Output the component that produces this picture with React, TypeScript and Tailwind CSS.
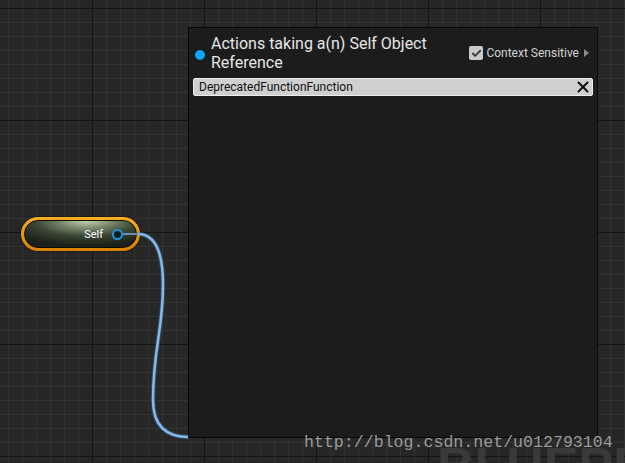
import { Check, X } from "lucide-react";

const gridBg =
    "bg-[#272727] [background-image:linear-gradient(to_right,#151515_1px,transparent_1px),linear-gradient(to_bottom,#151515_1px,transparent_1px),linear-gradient(to_right,#323232_1px,transparent_1px),linear-gradient(to_bottom,#323232_1px,transparent_1px)] [background-size:112px_112px,112px_112px,14px_14px,14px_14px] [background-position:92px_8px,92px_8px,92px_8px,92px_8px]";

const SelfNode = () => {
    return (
        <div className="absolute left-[21px] top-[217px] w-[119px] h-[34px] rounded-full p-[3px] bg-gradient-to-b from-[#f7ae22] to-[#d98200] shadow-[0_0_2px_#000]">
            <div className="w-full h-full rounded-full border border-[#0c0c0c] bg-[radial-gradient(ellipse_75%_95%_at_55%_0%,#c3d2b0_0%,#7a8a6c_30%,#3a4534_62%,#1b2018_100%)] flex items-center justify-end pr-[13px]">
                <span className="text-[11px] text-white font-['Roboto',sans-serif] mr-[9px] leading-none">Self</span>
                <span className="w-[11px] h-[11px] rounded-full border-2 border-[#1c93dc] bg-[#161a16]"></span>
            </div>
        </div>
    );
};

const Wire = () => {
    return (
        <svg className="absolute left-0 top-0" width="625" height="463">
            <path
                d="M138 234 C152 234 163 245 163 285 C163 330 153 350 153 400 C153 425 165 437 189 437"
                fill="none"
                stroke="#3d6b96"
                strokeWidth="4.5"
                strokeOpacity="0.5"
            />
            <path
                d="M138 234 C152 234 163 245 163 285 C163 330 153 350 153 400 C153 425 165 437 189 437"
                fill="none"
                stroke="#86b9ea"
                strokeWidth="2.5"
            />
            <path d="M123 234 L138 234" stroke="#6d8fae" strokeWidth="2" />
        </svg>
    );
};

const ActionMenu = () => {
    return (
        <div className="absolute left-[188px] top-[27px] w-[410px] h-[411px] bg-[#1c1c1c] border border-[#080808] font-['Roboto',sans-serif]">
            <div className="flex items-start justify-between pl-[6px] pr-[8px] pt-[6px]">
                <div className="flex items-start gap-[6px]">
                    <span className="mt-[16px] w-[10px] h-[10px] rounded-full bg-[#0aa5f5] shrink-0"></span>
                    <div className="text-[16px] leading-[19px] text-[#e6e6e6] w-[240px]">
                        Actions taking a(n) Self Object Reference
                    </div>
                </div>
                <div className="flex items-center mt-[10px]">
                    <span className="w-[14px] h-[14px] rounded-[2px] bg-[#c9c9c9] flex items-center justify-center">
                        <Check size={11} strokeWidth={4} color="#3a3a3a" />
                    </span>
                    <span className="ml-[3px] text-[12px] text-[#d2d2d2]">Context Sensitive</span>
                    <span className="ml-[5px] w-0 h-0 border-y-[4.5px] border-y-transparent border-l-[5px] border-l-[#8a8a8a]"></span>
                </div>
            </div>
            <div className="mx-[4px] mt-[6px] h-[18px] rounded-[2px] bg-[#cfcfcf] border border-[#ececec] flex items-center justify-between pl-[5px] pr-0">
                <span className="text-[12px] text-[#111] leading-none">DeprecatedFunctionFunction</span>
                <X size={18} strokeWidth={2.6} color="#111" />
            </div>
        </div>
    );
};

export default function App() {
    return (
        <div className={`relative w-[625px] h-[463px] overflow-hidden ${gridBg}`}>
            <SelfNode />
            <Wire />
            <div className="absolute left-[437px] top-[440px] text-[52px] font-bold leading-none text-[#393939] font-['Liberation_Sans',sans-serif]">
                BLUEPRINT
            </div>
            <ActionMenu />
            <div className="absolute left-[304px] top-[432px] text-[16.6px] leading-[22px] text-[#9a9a9a] font-['Liberation_Mono',monospace]">
                http://blog.csdn.net/u012793104
            </div>
        </div>
    );
}
